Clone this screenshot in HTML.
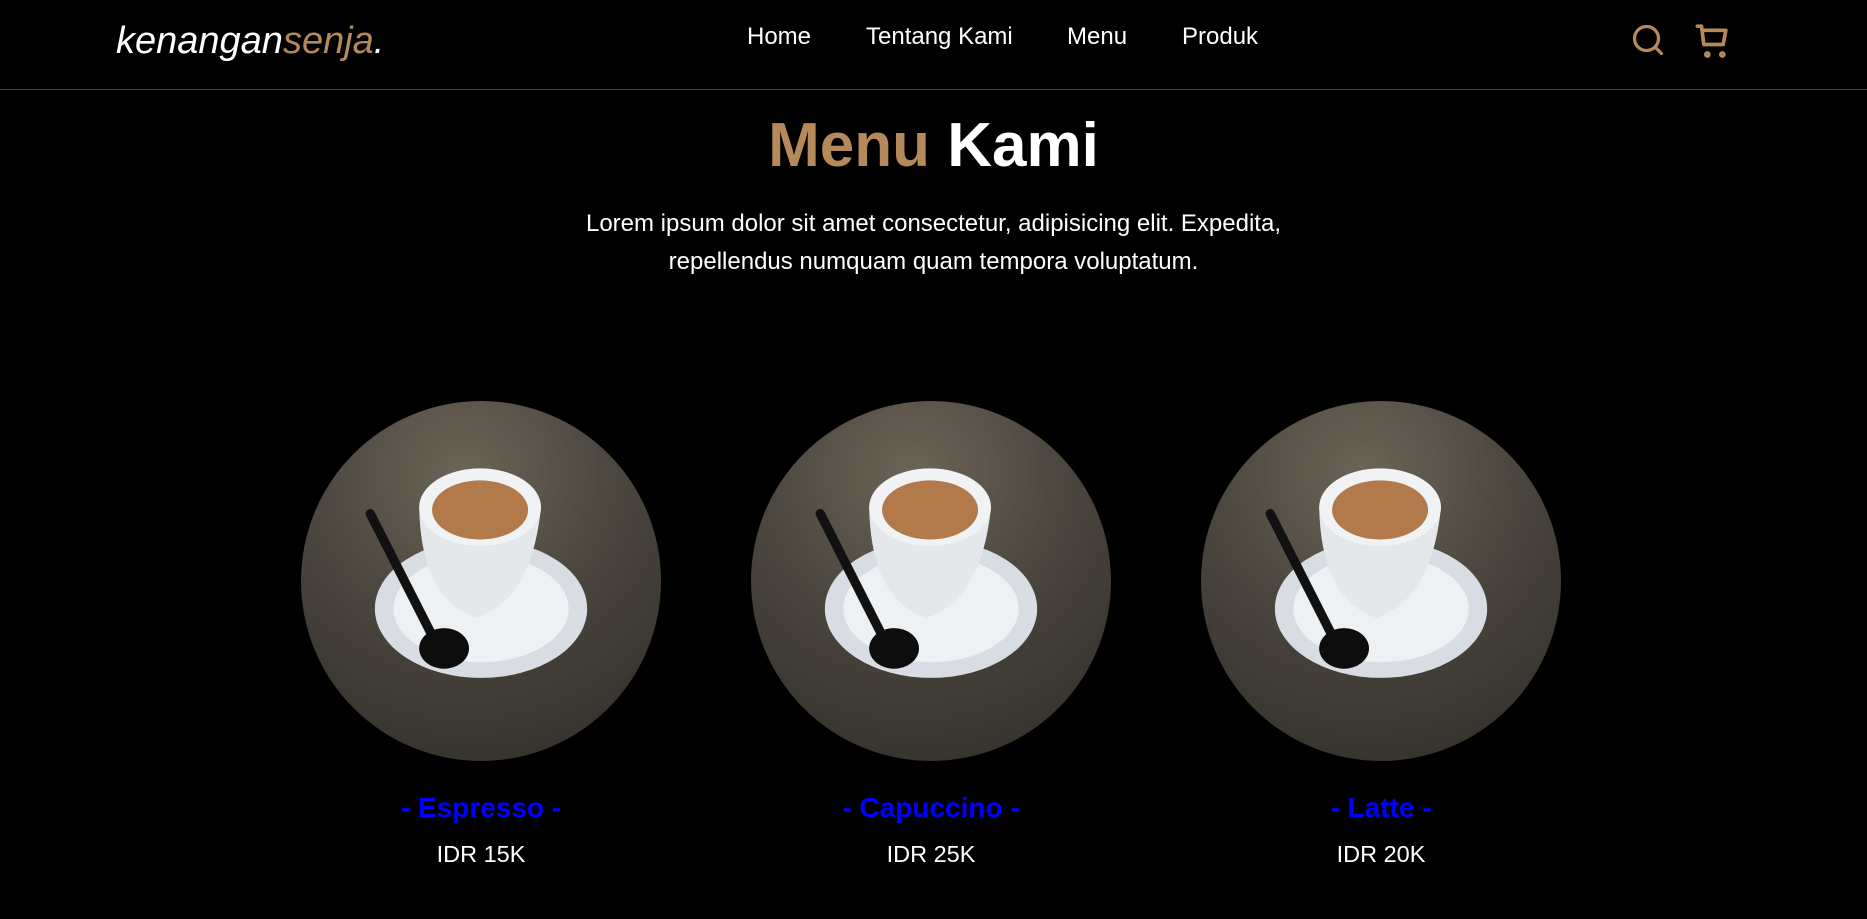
<!DOCTYPE html>
<html><head><meta charset="utf-8"><style>
*{margin:0;padding:0;box-sizing:border-box}
body{width:1867px;height:919px;background:#000;color:#fff;font-family:"Liberation Sans",sans-serif;overflow:hidden;position:relative}
.hdr{position:absolute;left:0;top:0;width:1867px;height:90px;border-bottom:1px solid #4a3d30}
.logo{position:absolute;left:116px;top:20px;font-size:38px;font-style:italic;color:#fff}
.logo span{color:#b6895b}
.nav a{position:absolute;top:23px;font-size:24px;color:#fff;text-decoration:none}
.ic{position:absolute;top:22px}
h1{position:absolute;top:110px;width:100%;text-align:center;font-size:62px;font-weight:bold}
h1 span{color:#b6895b}
p.d{position:absolute;top:205px;left:0;width:100%;text-align:center;font-size:24px;line-height:38px}
.card{position:absolute;top:401px;width:360px;text-align:center}
.circ{width:360px;height:360px;border-radius:50%;background:radial-gradient(circle at 45% 20%,#6b6457,#4a453d 45%,#2e2b27 100%);position:relative;overflow:hidden}
.nm{margin-top:31px;font-size:28px;font-weight:bold;color:#0000ff}
.pr{margin-top:17px;font-size:23.5px}
</style></head><body>
<div class="hdr">
<div class="logo">kenangan<span>senja</span>.</div>
<div class="nav"><a style="left:747px">Home</a><a style="left:866px">Tentang Kami</a><a style="left:1067px">Menu</a><a style="left:1182px">Produk</a></div>
<svg class="ic" style="left:1630px" width="36" height="36" viewBox="0 0 24 24" fill="none" stroke="#b6895b" stroke-width="2.2" stroke-linecap="round"><circle cx="11" cy="11" r="8"/><path d="M21 21l-4.3-4.3"/></svg>
<svg class="ic" style="left:1694px" width="40" height="40" viewBox="0 0 24 24" fill="none" stroke="#b6895b" stroke-width="2.2" stroke-linecap="round" stroke-linejoin="round"><path d="M2 2.5h2.5l1.4 11h11.6l1.6-8.5H5"/><circle cx="8" cy="19.5" r="0.9"/><circle cx="17" cy="19.5" r="0.9"/></svg>
</div>
<h1><span>Menu</span> Kami</h1>
<p class="d">Lorem ipsum dolor sit amet consectetur, adipisicing elit. Expedita,<br>repellendus numquam quam tempora voluptatum.</p>
<div class="card" style="left:301px"><div class="circ"><svg width="360" height="360" viewBox="0 0 390 390"><ellipse cx="195" cy="225" rx="115" ry="75" fill="#d7dde2"/><ellipse cx="195" cy="225" rx="95" ry="58" fill="#eef1f3"/><path d="M128 115 Q130 215 190 235 Q250 215 260 115Z" fill="#e4e8eb"/><ellipse cx="194" cy="115" rx="66" ry="42" fill="#f0f2f3"/><ellipse cx="194" cy="118" rx="52" ry="32" fill="#b27a4b"/><path d="M75 122 L140 250" stroke="#111" stroke-width="10" stroke-linecap="round"/><ellipse cx="155" cy="268" rx="27" ry="22" fill="#0d0d0d"/></svg></div><div class="nm">- Espresso -</div><div class="pr">IDR 15K</div></div>
<div class="card" style="left:751px"><div class="circ"><svg width="360" height="360" viewBox="0 0 390 390"><ellipse cx="195" cy="225" rx="115" ry="75" fill="#d7dde2"/><ellipse cx="195" cy="225" rx="95" ry="58" fill="#eef1f3"/><path d="M128 115 Q130 215 190 235 Q250 215 260 115Z" fill="#e4e8eb"/><ellipse cx="194" cy="115" rx="66" ry="42" fill="#f0f2f3"/><ellipse cx="194" cy="118" rx="52" ry="32" fill="#b27a4b"/><path d="M75 122 L140 250" stroke="#111" stroke-width="10" stroke-linecap="round"/><ellipse cx="155" cy="268" rx="27" ry="22" fill="#0d0d0d"/></svg></div><div class="nm">- Capuccino -</div><div class="pr">IDR 25K</div></div>
<div class="card" style="left:1201px"><div class="circ"><svg width="360" height="360" viewBox="0 0 390 390"><ellipse cx="195" cy="225" rx="115" ry="75" fill="#d7dde2"/><ellipse cx="195" cy="225" rx="95" ry="58" fill="#eef1f3"/><path d="M128 115 Q130 215 190 235 Q250 215 260 115Z" fill="#e4e8eb"/><ellipse cx="194" cy="115" rx="66" ry="42" fill="#f0f2f3"/><ellipse cx="194" cy="118" rx="52" ry="32" fill="#b27a4b"/><path d="M75 122 L140 250" stroke="#111" stroke-width="10" stroke-linecap="round"/><ellipse cx="155" cy="268" rx="27" ry="22" fill="#0d0d0d"/></svg></div><div class="nm">- Latte -</div><div class="pr">IDR 20K</div></div>
</body></html>
